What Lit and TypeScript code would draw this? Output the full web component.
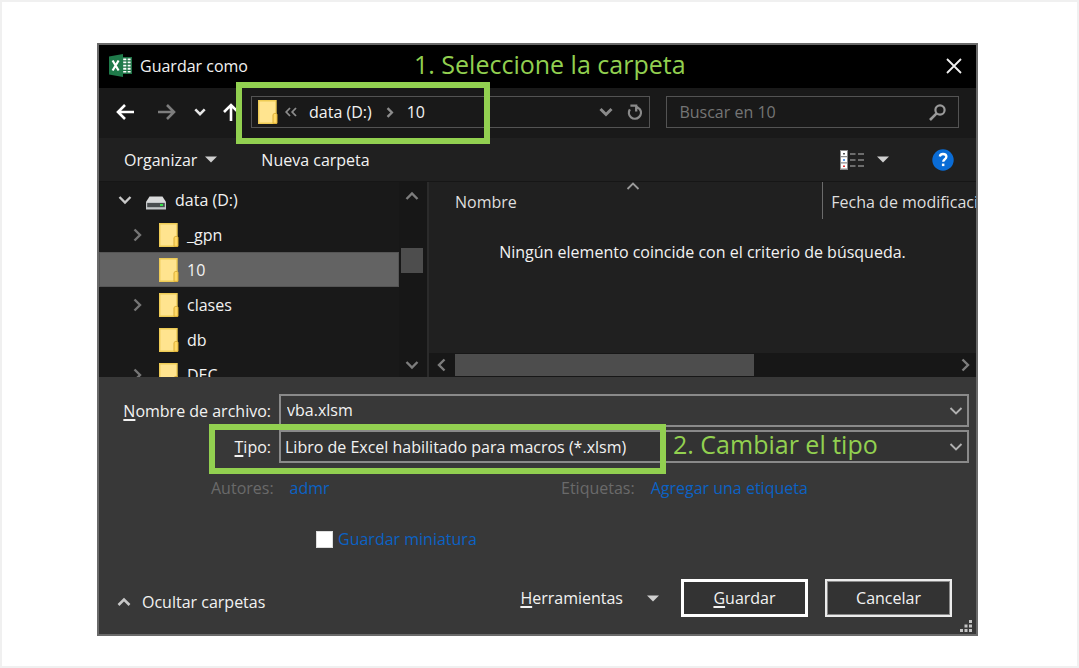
import { LitElement, html, css } from "lit";
import { customElement, property, state } from "lit/decorators.js";
import { classMap } from "lit/directives/class-map.js";

const shared = css`
  * {
    box-sizing: border-box;
  }
  button,
  input,
  select {
    font: inherit;
    color: inherit;
    background: none;
    border: 0;
    border-radius: 0;
    padding: 0;
    margin: 0;
    outline: none;
  }
  a {
    color: inherit;
    text-decoration: none;
  }
  svg {
    display: block;
    flex: none;
  }
  u {
    text-underline-offset: 2px;
    text-decoration-thickness: 2px;
  }
`;

const chevrons: Record<string, string> = {
  down: "M1.5 4 L7 9.5 L12.5 4",
  up: "M1.5 10 L7 4.5 L12.5 10",
  right: "M4.5 1.5 L10 7 L4.5 12.5",
  left: "M9.5 1.5 L4 7 L9.5 12.5",
};

const chevron = (dir: string, color: string, width = 2.4, size = 14) => html`
  <svg width=${size} height=${size} viewBox="0 0 14 14" fill="none" stroke=${color} stroke-width=${width} aria-hidden="true">
    <path d=${chevrons[dir]}></path>
  </svg>
`;

const caret = () => html`
  <svg width="12" height="7" viewBox="0 0 12 7" aria-hidden="true"><path d="M0 0.5h12L6 6.5z" fill="#cfcfcf"></path></svg>
`;

const folder = () => html`
  <svg width="20" height="24" viewBox="0 0 20 24" aria-hidden="true">
    <path d="M0.7 0.7h17.3v22.6H0.7z" fill="#ffe48f" stroke="#eecb55" stroke-width="1.4"></path>
    <path d="M15 23.3v-8.8l1.2-1h1.8l1 1v8.8z" fill="#ffd966" stroke="#dcae35" stroke-width="1"></path>
  </svg>
`;

const drive = () => html`
  <svg width="20" height="14" viewBox="0 0 20 14" aria-hidden="true">
    <path d="M3.5 0.5h13L20 6H0z" fill="#d9dadb"></path>
    <path d="M0 6h20v7.5H0z" fill="#c3c6c8"></path>
    <path d="M1.2 7h17.6v4.2H1.2z" fill="#4a4e50"></path>
    <path d="M14 8h3v2h-3z" fill="#35e04a"></path>
  </svg>
`;

@customElement("folder-tree")
class FolderTree extends LitElement {
  @property({ type: Array }) items: { name: string; open: boolean }[] = [];
  @state() private selected = "10";

  static styles = [
    shared,
    css`
      :host {
        display: flex;
        min-width: 0;
        background: #191919;
        overflow: hidden;
      }
      .list {
        flex: 1;
        min-width: 0;
        margin: 0;
        padding: 0;
        list-style: none;
      }
      .row {
        display: flex;
        align-items: center;
        width: 100%;
        height: 35px;
        padding-left: 30px;
        border: 1px solid transparent;
        text-align: left;
        white-space: nowrap;
      }
      .root {
        padding-left: 18px;
      }
      .root .twist {
        margin-right: 14px;
      }
      .root .name {
        margin-left: 9px;
      }
      .root .disk {
        padding-top: 6px;
      }
      .selected {
        background: #636363;
        border-color: #555;
      }
      .twist {
        width: 14px;
        margin-right: 15px;
      }
      .name {
        margin-left: 8px;
      }
      .scroll {
        display: flex;
        flex-direction: column;
        align-items: center;
        justify-content: space-between;
        width: 28px;
        padding: 7px 3px 5px 0;
        background: #171717;
      }
      .thumb {
        width: 22px;
        height: 25px;
        margin: 42px 0 83px;
        background: #4d4d4d;
      }
    `,
  ];

  render() {
    return html`
      <ul class="list" role="tree">
        <li role="treeitem" aria-expanded="true">
          <button class="row root">
            <span class="twist">${chevron("down", "#c8c8c8")}</span>
            <span class="disk">${drive()}</span>
            <span class="name">data (D:)</span>
          </button>
        </li>
        ${this.items.map(
          (item) => html`
            <li role="treeitem">
              <button
                class=${classMap({ row: true, selected: item.name === this.selected })}
                @click=${() => (this.selected = item.name)}
              >
                <span class="twist">${item.open ? chevron("right", "#757575") : ""}</span>
                ${folder()}
                <span class="name">${item.name}</span>
              </button>
            </li>
          `
        )}
      </ul>
      <div class="scroll">
        ${chevron("up", "#7d7d7d")}
        <div class="thumb"></div>
        ${chevron("down", "#7d7d7d")}
      </div>
    `;
  }
}

@customElement("file-list")
class FileList extends LitElement {
  static styles = [
    shared,
    css`
      :host {
        display: flex;
        flex-direction: column;
        min-width: 0;
        background: #202020;
        border-left: 2px solid #2b2b2b;
      }
      .table {
        width: 100%;
        table-layout: fixed;
        border-collapse: collapse;
      }
      .head {
        height: 37px;
        padding: 2px 0 0 8px;
        font-weight: 400;
        text-align: left;
        white-space: nowrap;
        overflow: hidden;
        color: #dedede;
      }
      .name {
        position: relative;
        padding-left: 26px;
        width: 72%;
      }
      .sort {
        position: absolute;
        top: -3px;
        left: 50%;
      }
      .date {
        border-left: 1px solid #6b6b6b;
      }
      .empty {
        padding: 21px 0 0;
        text-align: center;
      }
      .scroll {
        display: flex;
        align-items: center;
        height: 24px;
        margin-top: auto;
        padding: 0 4px 0 6px;
        background: #171717;
      }
      .track {
        flex: 1;
        height: 22px;
        margin: 0 5px 0 6px;
      }
      .thumb {
        width: 60%;
        height: 100%;
        background: #4d4d4d;
      }
    `,
  ];

  render() {
    return html`
      <table class="table">
        <thead>
          <tr>
            <th class="head name" aria-sort="ascending">
              Nombre<span class="sort">${chevron("up", "#9a9a9a", 1.8)}</span>
            </th>
            <th class="head date">Fecha de modificación</th>
          </tr>
        </thead>
        <tbody>
          <tr>
            <td class="empty" colspan="2">Ningún elemento coincide con el criterio de búsqueda.</td>
          </tr>
        </tbody>
      </table>
      <div class="scroll">
        ${chevron("left", "#7d7d7d")}
        <div class="track"><div class="thumb"></div></div>
        ${chevron("right", "#7d7d7d")}
      </div>
    `;
  }
}

@customElement("app-root")
class AppRoot extends LitElement {
  static styles = [
    shared,
    css`
      :host {
        display: block;
        box-sizing: border-box;
        min-height: 100vh;
        padding: 41px 99px 30px 95px;
        border: 2px solid #f0f0f0;
        background: #fff;
        font-family: "Open Sans", "Noto Sans", sans-serif;
        font-size: 16px;
        line-height: 24px;
        color: #f2f2f2;
      }
      .dialog {
        border: 2px solid #6a6a6a;
        background: #383838;
      }
      .title {
        position: relative;
        display: flex;
        align-items: center;
        height: 43px;
        padding: 0 14px 2px 10px;
        background: #000;
      }
      .caption {
        margin: 0 auto 0 8px;
        font-size: 16px;
        font-weight: 400;
      }
      .note {
        position: absolute;
        font-size: 25px;
        line-height: 32px;
        color: #92d050;
        white-space: nowrap;
      }
      .mark {
        position: absolute;
        border: 6px solid #92d050;
        pointer-events: none;
      }
      .note-folder {
        left: 315px;
        top: 3px;
      }
      .nav {
        display: flex;
        align-items: center;
        height: 50px;
        padding: 0 17px 2px;
        background: #191919;
      }
      .arrows {
        display: flex;
        align-items: center;
        gap: 16px;
        width: 135px;
      }
      .back {
        margin-right: 8px;
      }
      .recent {
        margin-left: 2px;
      }
      .address {
        position: relative;
        display: flex;
        align-items: center;
        flex: 386 1 0;
        height: 32px;
        padding: 0 6px;
        border: 1px solid #535353;
      }
      .parents {
        margin-left: 7px;
      }
      .crumb {
        margin: 0 12px;
      }
      .spacer {
        flex: 1;
      }
      .refresh {
        margin-left: 14px;
      }
      .mark-folder {
        left: -16px;
        top: -15px;
        width: 254px;
        height: 62px;
      }
      .search {
        display: flex;
        align-items: center;
        flex: 267 1 0;
        height: 32px;
        margin-left: 16px;
        padding: 0 12px;
        border: 1px solid #535353;
      }
      .search input {
        flex: 1;
        min-width: 0;
      }
      .search input::placeholder {
        color: #757575;
        opacity: 1;
      }
      .tools {
        display: flex;
        align-items: center;
        height: 43px;
        padding: 0 22px 0 25px;
        background: #202020;
      }
      .menu {
        display: flex;
        align-items: center;
        gap: 8px;
      }
      .new {
        margin: 0 auto 0 44px;
      }
      .view {
        gap: 13px;
        margin-right: 43px;
      }
      .panes {
        display: grid;
        grid-template-columns: 328px 1fr;
        height: 196px;
        border-top: 1px solid #161616;
        overflow: hidden;
      }
      .form {
        display: grid;
        grid-template-columns: 172px 1fr;
        column-gap: 8px;
        row-gap: 3px;
        padding: 17px 7px 0 0;
      }
      .label {
        align-self: center;
        text-align: right;
        white-space: nowrap;
      }
      .field {
        position: relative;
        display: flex;
        align-items: center;
        height: 33px;
        border: 2px solid #8a8a8a;
        background: #383838;
      }
      .field input,
      .field select {
        flex: 1;
        min-width: 0;
        height: 100%;
        padding: 0 0 2px 6px;
        appearance: none;
      }
      .field select {
        padding: 0 0 0 4px;
      }
      .type {
        background: #333;
      }
      .arrow {
        margin-right: 4px;
        pointer-events: none;
      }
      .mark-type {
        left: -72px;
        top: -8px;
        width: 457px;
        height: 50px;
      }
      .note-type {
        left: 392px;
        top: -4px;
      }
      .meta {
        display: grid;
        grid-template-columns: 1fr 1fr;
        padding: 13px 65px 0 112px;
      }
      .pair {
        display: flex;
        gap: 16px;
        color: #6a6a6a;
        white-space: nowrap;
      }
      .link {
        color: #0b62c4;
      }
      .thumb {
        display: flex;
        align-items: center;
        gap: 5px;
        padding: 27px 0 0 217px;
        color: #0b62c4;
      }
      .thumb input {
        width: 17px;
        height: 17px;
        appearance: none;
        background: #fff;
        border: 1px solid #ddd;
      }
      .thumb input:checked {
        box-shadow: inset 0 0 0 3px #fff;
        background: #0b62c4;
      }
      .actions {
        display: flex;
        align-items: center;
        padding: 28px 24px 0 18px;
      }
      .hide {
        margin: 8px auto 0 0;
        gap: 11px;
      }
      .more {
        gap: 24px;
        margin-right: 22px;
      }
      .push {
        width: 127px;
        height: 38px;
        border: 3px solid #fff;
        background: #333;
      }
      .cancel {
        margin-left: 17px;
        border: 2px solid #ececec;
        box-shadow: inset 0 0 0 1px #8a8a8a;
      }
      .grip {
        display: flex;
        justify-content: flex-end;
        padding: 3px 4px 2px 0;
      }
    `,
  ];

  private items = [
    { name: "_gpn", open: true },
    { name: "10", open: false },
    { name: "clases", open: true },
    { name: "db", open: false },
    { name: "DEC", open: true },
  ];

  private arrow(d: string, color: string) {
    return html`<svg width="18" height="18" viewBox="0 0 18 18" fill="none" stroke=${color} stroke-width="2.6" aria-hidden="true"><path d=${d}></path></svg>`;
  }

  render() {
    return html`
      <div class="dialog" role="dialog" aria-label="Guardar como">
        <header class="title">
          <svg width="23" height="23" viewBox="0 0 23 23" aria-hidden="true">
            <path d="M13.5 3.7h8.8v15.6h-8.8z" fill="#fff" stroke="#1f7246" stroke-width="1.4"></path>
            <path d="M14 6.8h8M14 10h8M14 13.2h8M14 16.4h8M18 4v15" stroke="#1f7246" stroke-width="1.3"></path>
            <path d="M0 2.6L14 0v23L0 20.4z" fill="#1f7a4a"></path>
            <path d="M3.6 6.5l6 10M9.6 6.5l-6 10" stroke="#fff" stroke-width="2.2"></path>
          </svg>
          <h1 class="caption">Guardar como</h1>
          <button aria-label="Cerrar">
            <svg width="16" height="16" viewBox="0 0 16 16" stroke="#f0f0f0" stroke-width="1.8" aria-hidden="true">
              <path d="M1 1l14 14M15 1L1 15"></path>
            </svg>
          </button>
          <div class="note note-folder">1. Seleccione la carpeta</div>
        </header>

        <nav class="nav">
          <div class="arrows">
            <button class="back" aria-label="Atrás">${this.arrow("M18 9H2M9 2L2 9l7 7", "#fff")}</button>
            <button aria-label="Adelante">${this.arrow("M0 9h16M9 2l7 7-7 7", "#7d7d7d")}</button>
            <button class="recent" aria-label="Recientes">${chevron("down", "#e6e6e6", 3, 12)}</button>
            <button aria-label="Arriba">${this.arrow("M9 18V2M2 9l7-7 7 7", "#fff")}</button>
          </div>
          <div class="address">
            ${folder()}
            <svg class="parents" width="12" height="10" viewBox="0 0 12 10" fill="none" stroke="#8c8c8c" stroke-width="1.8" aria-hidden="true">
              <path d="M5 1L1.2 5 5 9M11 1L7.2 5 11 9"></path>
            </svg>
            <button class="crumb">data (D:)</button>
            ${chevron("right", "#8c8c8c", 3, 11)}
            <button class="crumb">10</button>
            <span class="spacer"></span>
            ${chevron("down", "#8a8a8a", 3)}
            <button class="refresh" aria-label="Actualizar">
              <svg width="16" height="17" viewBox="0 0 16 17" fill="none" stroke="#8a8a8a" stroke-width="2.3" aria-hidden="true">
                <path d="M2.9 5.4A6 6 0 1 0 12.8 5.2L8.6 2M3.4 1.6h5.8v6"></path>
              </svg>
            </button>
            <div class="mark mark-folder"></div>
          </div>
          <label class="search">
            <input type="text" placeholder="Buscar en 10" aria-label="Buscar en 10" />
            <svg width="17" height="17" viewBox="0 0 17 17" fill="none" stroke="#9a9a9a" aria-hidden="true">
              <circle cx="11" cy="6" r="4.6" stroke-width="2.2"></circle>
              <path d="M7.6 9.4L1 16" stroke-width="2.6"></path>
            </svg>
          </label>
        </nav>

        <div class="tools">
          <button class="menu">Organizar ${caret()}</button>
          <button class="new">Nueva carpeta</button>
          <button class="menu view" aria-label="Cambiar la vista">
            <svg width="24" height="20" viewBox="0 0 24 20" aria-hidden="true">
              <path d="M0 0h8v20H0z" fill="#8a8a8a"></path>
              <path d="M1 1h6v5H1zM1 7.3h6v5H1zM1 13.6h6v5H1z" fill="#fff"></path>
              <path d="M3 3h2v1.5H3z" fill="#555"></path>
              <path d="M3 9.2h2v1.5H3z" fill="#2b7de0"></path>
              <path d="M3 15.4h2v1.5H3z" fill="#e03030"></path>
              <path d="M10 4h5.5M18 4h6M10 10h5.5M18 10h6M10 16h5.5M18 16h6" stroke="#858585" stroke-width="1.4"></path>
            </svg>
            ${caret()}
          </button>
          <button aria-label="Ayuda">
            <svg width="22" height="22" viewBox="0 0 22 22" aria-hidden="true">
              <circle cx="11" cy="11" r="10.7" fill="#0a6cd6"></circle>
              <path d="M7.8 7.4C8.2 5.6 9.4 5 11 5c2 0 3.4 1 3.4 2.8 0 2.4-3.2 2.5-3.2 5" fill="none" stroke="#fff" stroke-width="2.3"></path>
              <path d="M9.9 14.6h2.5v2.5H9.9z" fill="#fff"></path>
            </svg>
          </button>
        </div>

        <div class="panes">
          <folder-tree .items=${this.items}></folder-tree>
          <file-list></file-list>
        </div>

        <div class="form">
          <label class="label" for="file"><u>N</u>ombre de archivo:</label>
          <div class="field">
            <input id="file" type="text" value="vba.xlsm" />
            <span class="arrow">${chevron("down", "#b0b0b0", 1.9)}</span>
          </div>
          <label class="label" for="type"><u>T</u>ipo:</label>
          <div class="field type">
            <select id="type">
              <option>Libro de Excel habilitado para macros (*.xlsm)</option>
            </select>
            <span class="arrow">${chevron("down", "#b0b0b0", 1.9)}</span>
            <div class="mark mark-type"></div>
            <div class="note note-type">2. Cambiar el tipo</div>
          </div>
        </div>

        <div class="meta">
          <div class="pair">Autores: <a class="link" href="#">admr</a></div>
          <div class="pair">Etiquetas: <a class="link" href="#">Agregar una etiqueta</a></div>
        </div>

        <div class="thumb">
          <input id="mini" type="checkbox" />
          <label for="mini">Guardar miniatura</label>
        </div>

        <div class="actions">
          <button class="menu hide">${chevron("up", "#c8c8c8", 2.6)} Ocultar carpetas</button>
          <button class="menu more"><span><u>H</u>erramientas</span>${caret()}</button>
          <button class="push"><u>G</u>uardar</button>
          <button class="push cancel">Cancelar</button>
        </div>
        <div class="grip">
          <svg width="12" height="12" viewBox="0 0 12 12" fill="#c4c4c4" aria-hidden="true">
            <path d="M9 0h3v3H9zM4.5 4.5h3v3h-3zM9 4.5h3v3H9zM0 9h3v3H0zM4.5 9h3v3h-3zM9 9h3v3H9z"></path>
          </svg>
        </div>
      </div>
    `;
  }
}
